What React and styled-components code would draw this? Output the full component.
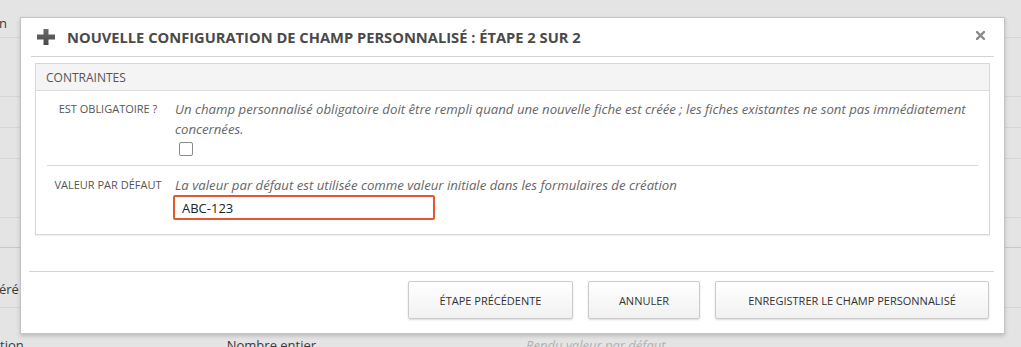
import React from "react";
import styled, { createGlobalStyle } from "styled-components";

const GlobalStyle = createGlobalStyle`
  html, body {
    margin: 0;
    padding: 0;
    background: #e4e4e4;
    font-family: "Open Sans", "Liberation Sans", sans-serif;
  }
  * { box-sizing: border-box; }
`;

export default function App() {
  return (
    <>
      <GlobalStyle />
      <Page>
        <BackRow h={38}>
          <BackText top={14}>n</BackText>
        </BackRow>
        <BackRow h={59} />
        <BackRow h={31} />
        <BackRow h={31} />
        <BackRow h={59} />
        <BackRow h={30} dark />
        <BackRow h={60}>
          <BackText top={32}>éré</BackText>
        </BackRow>
        <BottomText>
          <span>tion</span>
          <Plain>Nombre entier</Plain>
          <Faint>Rendu valeur par défaut</Faint>
        </BottomText>

        <Modal>
          <Header>
            <PlusIcon viewBox="0 0 18 16">
              <defs>
                <linearGradient id="pg" x1="0" y1="0" x2="0" y2="1">
                  <stop offset="0" stopColor="#6a6a6a" />
                  <stop offset="1" stopColor="#4a4a4a" />
                </linearGradient>
              </defs>
              <path d="M6.5 0h5v5.5H18v5h-6.5V16h-5v-5.5H0v-5h6.5z" fill="url(#pg)" />
            </PlusIcon>
            <Title>Nouvelle configuration de champ personnalisé : étape 2 sur 2</Title>
            <Close>
              <svg width="9" height="9" viewBox="0 0 9 9">
                <path d="M1 1l7 7M8 1l-7 7" stroke="#8a8a8a" strokeWidth="2.4" strokeLinecap="square" />
              </svg>
            </Close>
          </Header>

          <Body>
            <Panel>
              <PanelHead>Contraintes</PanelHead>
              <Field>
                <Label>Est obligatoire ?</Label>
                <Control>
                  <Help>
                    Un champ personnalisé obligatoire doit être rempli quand une nouvelle fiche est créée ; les fiches existantes ne sont pas immédiatement concernées.
                  </Help>
                  <Check type="checkbox" />
                </Control>
              </Field>
              <Field last>
                <Label>Valeur par défaut</Label>
                <Control>
                  <Help>La valeur par défaut est utilisée comme valeur initiale dans les formulaires de création</Help>
                  <Input defaultValue="ABC-123" />
                </Control>
              </Field>
            </Panel>
          </Body>

          <Footer>
            <Button w={165}>Étape précédente</Button>
            <Button w={112}>Annuler</Button>
            <Button w={274}>Enregistrer le champ personnalisé</Button>
          </Footer>
        </Modal>
      </Page>
    </>
  );
}

const Page = styled.div`
  position: relative;
  width: 1021px;
  height: 347px;
  overflow: hidden;
  background: #e4e4e4;
`;

const BackRow = styled.div`
  position: relative;
  height: ${(p) => p.h}px;
  border-bottom: 1px solid ${(p) => (p.dark ? "#c9c9c9" : "#d6d6d6")};
`;

const BackText = styled.span`
  position: absolute;
  left: -1px;
  top: ${(p) => p.top}px;
  font-size: 13px;
  color: #3a3a3a;
`;

const BottomText = styled.div`
  display: flex;
  padding: 28px 0 0 0;
  font-size: 13px;
  color: #3a3a3a;
  white-space: nowrap;
`;

const Plain = styled.span`
  margin-left: 203px;
`;

const Faint = styled.span`
  margin-left: 210px;
  color: #b0b0b0;
  font-style: italic;
`;

const Modal = styled.div`
  position: absolute;
  left: 20px;
  top: 17px;
  width: 985px;
  height: 317px;
  background: #fff;
  border: 1px solid #c4c4c4;
  box-shadow: 0 2px 4px rgba(0, 0, 0, 0.18);
  display: flex;
  flex-direction: column;
`;

const Header = styled.div`
  display: flex;
  align-items: center;
  height: 39px;
  margin: 0 10px;
  padding: 0 7px 0 6px;
  border-bottom: 1px solid #d2d2d2;
`;

const PlusIcon = styled.svg`
  width: 18px;
  height: 16px;
  margin-right: 12px;
  flex-shrink: 0;
`;

const Title = styled.h3`
  margin: 0;
  flex: 1;
  font-size: 14.7px;
  font-weight: 700;
  text-transform: uppercase;
  color: #4a4a4a;
  white-space: nowrap;
`;

const Close = styled.span`
  display: flex;
  width: 9px;
  height: 9px;
  margin-right: 2px;
  margin-top: -4px;
`;

const Body = styled.div`
  padding: 6px 14px 0 14px;
`;

const Panel = styled.div`
  border: 1px solid #d8d8d8;
  box-shadow: 0 1px 1px rgba(0, 0, 0, 0.06);
  padding-bottom: 14px;
`;

const PanelHead = styled.div`
  height: 27px;
  padding: 0 10px;
  display: flex;
  align-items: center;
  background: #f4f4f4;
  border-bottom: 1px solid #dcdcdc;
  font-size: 12px;
  text-transform: uppercase;
  color: #555;
`;

const Field = styled.div`
  display: grid;
  grid-template-columns: 128px 1fr;
  margin: 0 11px;
  padding-top: ${(p) => (p.last ? "9px" : "8px")};
  padding-bottom: ${(p) => (p.last ? "0" : "9px")};
  border-bottom: ${(p) => (p.last ? "none" : "1px solid #d8d8d8")};
`;

const Label = styled.div`
  text-align: center;
  font-size: 11px;
  text-transform: uppercase;
  color: #555;
  line-height: 20px;
  padding-right: 6px;
`;

const Control = styled.div`
  display: flex;
  flex-direction: column;
  align-items: flex-start;
  padding-right: 4px;
`;

const Help = styled.div`
  font-size: 13.2px;
  font-style: italic;
  color: #666;
  line-height: 20px;
`;

const Check = styled.input`
  appearance: none;
  width: 14px;
  height: 14px;
  margin: 3px 0 0 4px;
  border: 1px solid #8a8a8a;
  border-radius: 2px;
  background: #fff;
`;

const Input = styled.input`
  width: 262px;
  height: 25px;
  margin: 0 0 0 -2px;
  padding: 0 7px;
  border: 2px solid #e4572e;
  border-radius: 2px;
  outline: none;
  font-family: "Open Sans", "Liberation Sans", sans-serif;
  font-size: 13px;
  color: #222;
`;

const Footer = styled.div`
  margin: auto 10px 0 8px;
  border-top: 1px solid #d2d2d2;
  display: flex;
  justify-content: flex-end;
  gap: 15px;
  padding: 9px 5px 14px 0;
`;

const Button = styled.button`
  height: 38px;
  width: ${(p) => p.w}px;
  padding: 0;
  white-space: nowrap;
  border: 1px solid #cbcbcb;
  border-radius: 2px;
  background: linear-gradient(#ffffff, #f1f1f1);
  box-shadow: 0 1px 2px rgba(0, 0, 0, 0.15);
  font-family: "Open Sans", "Liberation Sans", sans-serif;
  font-size: 11px;
  text-transform: uppercase;
  color: #333;
`;
